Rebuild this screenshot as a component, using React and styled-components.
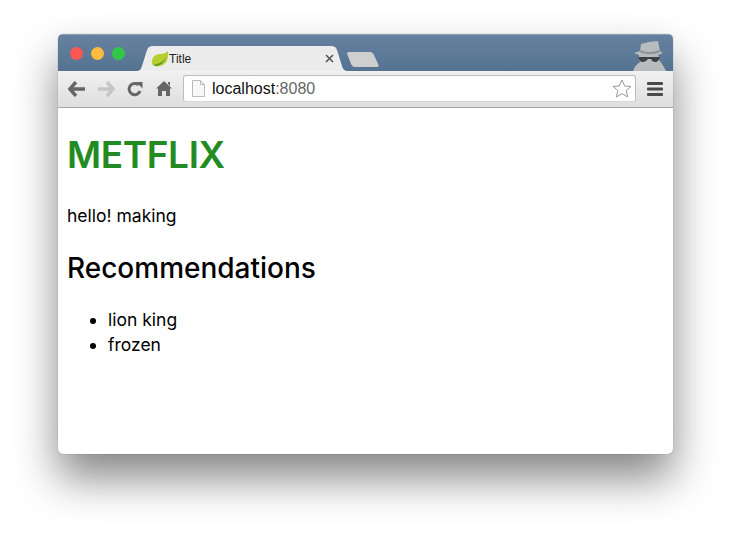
import React from 'react';
import styled, { createGlobalStyle } from 'styled-components';

const Global = createGlobalStyle`
  html, body { margin: 0; padding: 0; background: #fff; }
  body { font-family: Inter, "Liberation Sans", Arial, sans-serif; }
`;

const Page = styled.div`
  width: 732px;
  height: 537px;
  box-sizing: border-box;
  padding: 34px 59px 83px 58px;
  overflow: hidden;
`;

const Window = styled.div`
  height: 100%;
  display: flex;
  flex-direction: column;
  border-radius: 5px;
  overflow: hidden;
  background: #fff;
  box-shadow: 0 24px 44px rgba(0, 0, 0, 0.48), 0 0 1px rgba(0, 0, 0, 0.5);
`;

const TitleBar = styled.div`
  height: 37px;
  flex: none;
  position: relative;
  display: flex;
  align-items: flex-end;
  padding-left: 78px;
  background: linear-gradient(#66819f, #557391);
  border-top: 1px solid #8aa0b8;
  box-sizing: border-box;
`;

const Lights = styled.div`
  display: flex;
  gap: 8px;
  position: absolute;
  left: 12px;
  top: 11.5px;
`;

const Light = styled.span`
  width: 13px;
  height: 13px;
  border-radius: 50%;
  background: ${p => p.$color};
`;

const Tab = styled.div`
  position: relative;
  width: 213px;
  height: 25px;
  display: flex;
  align-items: center;
  padding: 0 15px 0 15px;
  box-sizing: border-box;
  font-family: "Liberation Sans", Arial, sans-serif;
  font-size: 12px;
  color: #222;
`;

const TabShape = styled.svg`
  position: absolute;
  left: 0;
  top: 0;
`;

const TabLabel = styled.span`
  position: relative;
  flex: 1;
  padding-top: 1px;
`;

const TabClose = styled.svg`
  position: relative;
  flex: none;
`;

const Favicon = styled.svg`
  position: relative;
  flex: none;
`;

const NewTab = styled.svg`
  position: relative;
  margin-left: -3px;
  margin-bottom: 4px;
`;

const Spy = styled.svg`
  position: absolute;
  right: 5px;
  bottom: 0;
`;

const Toolbar = styled.div`
  height: 37px;
  flex: none;
  display: flex;
  align-items: center;
  padding: 0 10px 1px 10px;
  box-sizing: border-box;
  background: linear-gradient(#f1f1f1, #dedede);
  border-bottom: 1px solid #a9a9a9;
`;

const NavIcon = styled.svg`
  flex: none;
  margin-right: ${p => p.$gap}px;
`;

const Omnibox = styled.div`
  flex: 1;
  height: 27px;
  display: flex;
  align-items: center;
  padding: 0 3px 0 8px;
  background: #fff;
  border: 1px solid #bdbdbd;
  border-bottom-color: #d6d6d6;
  border-radius: 3px;
  box-sizing: border-box;
  font-family: "Liberation Sans", Arial, sans-serif;
  font-size: 16px;
  margin-right: 11px;
`;

const Host = styled.span`
  color: #111;
  margin-left: 7px;
  padding-top: 1px;
  flex: 1;
`;

const Port = styled.span`
  color: #666;
`;

const Content = styled.main`
  flex: 1;
  padding: 0 9px;
  color: #000;
`;

const Heading = styled.h1`
  margin: 25px 0 0;
  font-size: 37px;
  line-height: 44px;
  font-weight: 600;
  color: #228b22;
  letter-spacing: -0.4px;
`;

const Greeting = styled.p`
  margin: 27px 0 0;
  font-size: 17.5px;
  line-height: 24px;
`;

const SubHeading = styled.h2`
  margin: 23px 0 0;
  font-size: 28px;
  line-height: 34px;
  font-weight: 500;
`;

const List = styled.ul`
  margin: 22px 0 0;
  padding-left: 41px;
  font-size: 17.5px;
  line-height: 25px;
`;

export default function App() {
  return (
    <Page>
      <Global />
      <Window>
        <TitleBar>
          <Lights>
            <Light $color="#fc5753" />
            <Light $color="#fdbc40" />
            <Light $color="#33c748" />
          </Lights>
          <Tab>
            <TabShape width="213" height="25" viewBox="0 0 213 25">
              <path d="M0 25 C4 25 5 23 6 20 L11 4 C12 1 14 0 17 0 L195 0 C198 0 200 1 201 4 L206 20 C207 23 208 25 213 25 Z" fill="#ececec" />
            </TabShape>
            <Favicon width="18" height="16" viewBox="0 0 18 16">
              <path d="M1 13 C0 7 4 3 9 3 C13 3 15 2 17 0 C18 6 16 14 9 15 C5 16 3 15 1 13 Z" fill="#b7cf2f" />
              <path d="M2 14 C6 13 12 12 15 6 C14 11 9 15 5 15 Z" fill="#5f9a2a" />
            </Favicon>
            <TabLabel>Title</TabLabel>
            <TabClose width="9" height="9" viewBox="0 0 9 9">
              <path d="M1 1 L8 8 M8 1 L1 8" stroke="#555" strokeWidth="1.6" />
            </TabClose>
          </Tab>
          <NewTab width="33" height="15" viewBox="0 0 33 15">
            <path d="M1 1.5 C1 .5 2 0 3 0 L24 0 C26 0 27 1 28 3 L32.5 13 C33 14 32 15 31 15 L9 15 C7 15 6 14 5 12 Z" fill="#cfcfcf" />
          </NewTab>
          <Spy width="38" height="30" viewBox="0 0 36 30">
            <path d="M10 3 L18 1 L27 0 L29 10 L32 12 L27 14 C28 15 28 17 28 19 C31 22 33 26 35 30 L2 30 C3 26 6 23 9 21 C8 19 8 16 8 14 L3 12 L9 10 Z" fill="#b9bcbd" />
            <path d="M9 9 C15 12 23 11 29 9 L29 11 C23 14 15 14 9 11 Z" fill="#8f9395" />
            <path d="M7 16 L29 16 L27 20 C25 22 21 21 20 18 L17 18 C15 21 11 22 9 20 Z" fill="#3f4143" />
          </Spy>
        </TitleBar>
        <Toolbar>
          <NavIcon $gap={11} width="18" height="16" viewBox="0 0 18 16">
            <path d="M8 1 L1.8 8 L8 15 M2 8 L17 8" stroke="#666" strokeWidth="3.4" fill="none" />
          </NavIcon>
          <NavIcon $gap={12} width="18" height="16" viewBox="0 0 18 16">
            <path d="M10 1 L16.2 8 L10 15 M16 8 L1 8" stroke="#c6c6c6" strokeWidth="3.4" fill="none" />
          </NavIcon>
          <NavIcon $gap={13} width="16" height="16" viewBox="0 0 16 16">
            <path d="M13 10 A5.6 5.6 0 1 1 11.5 4" stroke="#666" strokeWidth="3" fill="none" />
            <path d="M9 1 L15.5 1 L15.5 7.5 Z" fill="#666" />
          </NavIcon>
          <NavIcon $gap={11} width="16" height="15" viewBox="0 0 16 15">
            <path d="M8 0 L16 7.5 L14 7.5 L14 15 L10 15 L10 10 L6 10 L6 15 L2 15 L2 7.5 L0 7.5 Z M12 1 L14 1 L14 5 L12 3 Z" fill="#666" />
          </NavIcon>
          <Omnibox>
            <svg width="13" height="17" viewBox="0 0 13 17">
              <path d="M.5.5 L8.5.5 L12.5 4.5 L12.5 16.5 L.5 16.5 Z" fill="#f8f8f8" stroke="#bbb" />
              <path d="M8.5.5 L8.5 4.5 L12.5 4.5" fill="none" stroke="#bbb" />
            </svg>
            <Host>localhost<Port>:8080</Port></Host>
            <svg width="20" height="19" viewBox="0 0 20 19">
              <path d="M10 1 L12.7 7 L19 7.4 L14.2 11.6 L15.7 18 L10 14.6 L4.3 18 L5.8 11.6 L1 7.4 L7.3 7 Z" fill="#fff" stroke="#999" />
            </svg>
          </Omnibox>
          <svg width="16" height="14" viewBox="0 0 16 14">
            <rect width="16" height="3" rx="1" fill="#4a4a4a" />
            <rect y="5.5" width="16" height="3" rx="1" fill="#4a4a4a" />
            <rect y="11" width="16" height="3" rx="1" fill="#4a4a4a" />
          </svg>
        </Toolbar>
        <Content>
          <Heading>METFLIX</Heading>
          <Greeting>hello! making</Greeting>
          <SubHeading>Recommendations</SubHeading>
          <List>
            <li>lion king</li>
            <li>frozen</li>
          </List>
        </Content>
      </Window>
    </Page>
  );
}
